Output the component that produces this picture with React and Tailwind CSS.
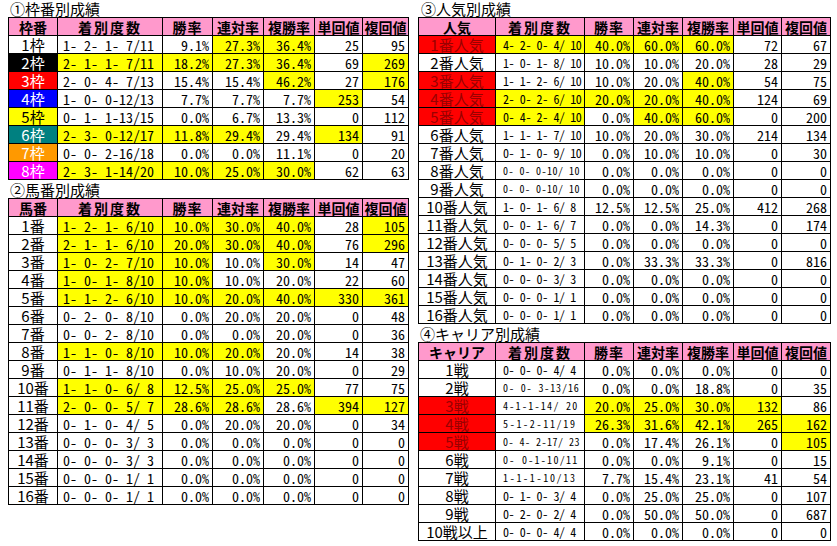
import React from "react";

const JP = "font-['Noto_Sans_CJK_JP','Noto_Sans',sans-serif]";
const MONO = "font-['Noto_Sans_Mono_CJK_JP','DejaVu_Sans_Mono',monospace]";

const LABEL_CLS = {
  w: "bg-white text-black",
  k: "bg-black text-white",
  r: "bg-[#ff0000] text-white",
  b: "bg-[#0000ff] text-white",
  y: "bg-[#ffff00] text-black",
  t: "bg-[#008080] text-white",
  o: "bg-[#ff9900] text-white",
  m: "bg-[#ff00ff] text-white",
  R: "bg-[#ff0000] text-[#990000]",
};

const SMALL_TRACK = {
  11: "tracking-[1.7px]",
  12: "tracking-[1.3px]",
  13: "tracking-[0.9px]",
  14: "tracking-[0.5px]",
};

const HEAD = ["着別度数", "勝率", "連対率", "複勝率", "単回値", "複回値"];

const T1 = [
  ["1枠", "w", "1- 2- 1- 7/11", "9.1%", "*27.3%", "*36.4%", "25", "95"],
  ["2枠", "k", "*2- 1- 1- 7/11", "*18.2%", "*27.3%", "*36.4%", "69", "*269"],
  ["3枠", "r", "2- 0- 4- 7/13", "15.4%", "15.4%", "*46.2%", "27", "*176"],
  ["4枠", "b", "1- 0- 0-12/13", "7.7%", "7.7%", "7.7%", "*253", "54"],
  ["5枠", "y", "0- 1- 1-13/15", "0.0%", "6.7%", "13.3%", "0", "112"],
  ["6枠", "t", "*2- 3- 0-12/17", "*11.8%", "*29.4%", "29.4%", "*134", "91"],
  ["7枠", "o", "0- 0- 2-16/18", "0.0%", "0.0%", "11.1%", "0", "20"],
  ["8枠", "m", "*2- 3- 1-14/20", "*10.0%", "*25.0%", "*30.0%", "62", "63"],
];

const T2 = [
  ["1番", "w", "*1- 2- 1- 6/10", "*10.0%", "*30.0%", "*40.0%", "28", "*105"],
  ["2番", "w", "*2- 1- 1- 6/10", "*20.0%", "*30.0%", "*40.0%", "76", "*296"],
  ["3番", "w", "*1- 0- 2- 7/10", "*10.0%", "10.0%", "*30.0%", "14", "47"],
  ["4番", "w", "*1- 0- 1- 8/10", "*10.0%", "10.0%", "20.0%", "22", "60"],
  ["5番", "w", "*1- 1- 2- 6/10", "*10.0%", "*20.0%", "*40.0%", "*330", "*361"],
  ["6番", "w", "0- 2- 0- 8/10", "0.0%", "20.0%", "20.0%", "0", "48"],
  ["7番", "w", "0- 0- 2- 8/10", "0.0%", "0.0%", "20.0%", "0", "36"],
  ["8番", "w", "*1- 1- 0- 8/10", "*10.0%", "*20.0%", "20.0%", "14", "38"],
  ["9番", "w", "0- 1- 1- 8/10", "0.0%", "10.0%", "20.0%", "0", "29"],
  ["10番", "w", "*1- 1- 0- 6/ 8", "*12.5%", "*25.0%", "*25.0%", "77", "75"],
  ["11番", "w", "*2- 0- 0- 5/ 7", "*28.6%", "*28.6%", "28.6%", "*394", "*127"],
  ["12番", "w", "0- 1- 0- 4/ 5", "0.0%", "20.0%", "20.0%", "0", "34"],
  ["13番", "w", "0- 0- 0- 3/ 3", "0.0%", "0.0%", "0.0%", "0", "0"],
  ["14番", "w", "0- 0- 0- 3/ 3", "0.0%", "0.0%", "0.0%", "0", "0"],
  ["15番", "w", "0- 0- 0- 1/ 1", "0.0%", "0.0%", "0.0%", "0", "0"],
  ["16番", "w", "0- 0- 0- 1/ 1", "0.0%", "0.0%", "0.0%", "0", "0"],
];

const T3 = [
  ["1番人気", "R", "*4- 2- 0- 4/ 10", "*40.0%", "*60.0%", "*60.0%", "72", "67"],
  ["2番人気", "w", "1- 0- 1- 8/ 10", "10.0%", "10.0%", "20.0%", "28", "29"],
  ["3番人気", "R", "1- 1- 2- 6/ 10", "10.0%", "20.0%", "*40.0%", "54", "75"],
  ["4番人気", "R", "*2- 0- 2- 6/ 10", "*20.0%", "*20.0%", "*40.0%", "124", "69"],
  ["5番人気", "R", "*0- 4- 2- 4/ 10", "0.0%", "*40.0%", "*60.0%", "0", "200"],
  ["6番人気", "w", "1- 1- 1- 7/ 10", "10.0%", "20.0%", "30.0%", "214", "134"],
  ["7番人気", "w", "0- 1- 0- 9/ 10", "0.0%", "10.0%", "10.0%", "0", "30"],
  ["8番人気", "w", "~0- 0- 0-10/ 10", "0.0%", "0.0%", "0.0%", "0", "0"],
  ["9番人気", "w", "~0- 0- 0-10/ 10", "0.0%", "0.0%", "0.0%", "0", "0"],
  ["10番人気", "w", "1- 0- 1- 6/ 8", "12.5%", "12.5%", "25.0%", "412", "268"],
  ["11番人気", "w", "0- 0- 1- 6/ 7", "0.0%", "0.0%", "14.3%", "0", "174"],
  ["12番人気", "w", "0- 0- 0- 5/ 5", "0.0%", "0.0%", "0.0%", "0", "0"],
  ["13番人気", "w", "0- 1- 0- 2/ 3", "0.0%", "33.3%", "33.3%", "0", "816"],
  ["14番人気", "w", "0- 0- 0- 3/ 3", "0.0%", "0.0%", "0.0%", "0", "0"],
  ["15番人気", "w", "0- 0- 0- 1/ 1", "0.0%", "0.0%", "0.0%", "0", "0"],
  ["16番人気", "w", "0- 0- 0- 1/ 1", "0.0%", "0.0%", "0.0%", "0", "0"],
];

const T4 = [
  ["1戦", "w", "0- 0- 0- 4/ 4", "0.0%", "0.0%", "0.0%", "0", "0"],
  ["2戦", "w", "~0- 0- 3-13/16", "0.0%", "0.0%", "18.8%", "0", "35"],
  ["3戦", "R", "~4-1-1-14/ 20", "*20.0%", "*25.0%", "*30.0%", "*132", "86"],
  ["4戦", "R", "~5-1-2-11/19", "*26.3%", "*31.6%", "*42.1%", "*265", "*162"],
  ["5戦", "R", "~0- 4- 2-17/ 23", "0.0%", "17.4%", "26.1%", "0", "*105"],
  ["6戦", "w", "~0- 0-1-10/11", "0.0%", "0.0%", "9.1%", "0", "15"],
  ["7戦", "w", "~1-1-1-10/13", "7.7%", "15.4%", "23.1%", "41", "54"],
  ["8戦", "w", "0- 1- 0- 3/ 4", "0.0%", "25.0%", "25.0%", "0", "107"],
  ["9戦", "w", "0- 2- 0- 2/ 4", "0.0%", "50.0%", "50.0%", "0", "687"],
  ["10戦以上", "w", "0- 0- 0- 4/ 4", "0.0%", "0.0%", "0.0%", "0", "0"],
];

function parse(v) {
  let yellow = false;
  let small = false;
  let s = v;
  if (s.startsWith("*")) {
    yellow = true;
    s = s.slice(1);
  }
  if (s.startsWith("~")) {
    small = true;
    s = s.slice(1);
  }
  return { yellow, small, s };
}

function Table({ cols, first, rows, wide }) {
  return (
    <div className={`grid border-l border-t border-black ${cols}`}>
      <div
        className={`h-[18px] border-r border-b border-black bg-[#ff99cc] flex items-center justify-center text-[14px] font-bold leading-none ${JP}`}
      >
        {first}
      </div>
      {HEAD.map((h, i) => (
        <div
          key={h}
          className={`h-[18px] border-r border-b border-black bg-[#ff99cc] flex items-center justify-center text-[14px] font-bold leading-none ${JP} ${
            i === 0 ? "tracking-[2px]" : i === 1 ? "tracking-[1px]" : ""
          }`}
        >
          {h}
        </div>
      ))}
      {rows.map((r, ri) => {
        const rec = parse(r[2]);
        const size = rec.small
          ? `text-[10px] ${SMALL_TRACK[rec.s.length] || ""}`
          : wide
          ? "text-[14px]"
          : "text-[12px] tracking-[-0.4px]";
        return (
          <React.Fragment key={ri}>
            <div
              className={`h-[18px] border-r border-b border-black flex items-center justify-center text-[15px] leading-none whitespace-nowrap ${JP} ${LABEL_CLS[r[1]]}`}
            >
              {r[0]}
            </div>
            <div
              className={`h-[18px] border-r border-b border-black flex items-center leading-none whitespace-pre ${MONO} ${
                wide ? "pl-[5px]" : "pl-[7px]"
              } ${size} ${rec.yellow ? "bg-[#ffff00]" : "bg-white"}`}
            >
              {rec.s}
            </div>
            {r.slice(3).map((v, vi) => {
              const p = parse(v);
              return (
                <div
                  key={vi}
                  className={`h-[18px] border-r border-b border-black flex items-center justify-end pr-[3px] text-[14px] leading-none whitespace-pre ${MONO} ${
                    p.yellow ? "bg-[#ffff00]" : "bg-white"
                  }`}
                >
                  {p.s}
                </div>
              );
            })}
          </React.Fragment>
        );
      })}
    </div>
  );
}

function Title({ children, h, pl }) {
  return (
    <div
      className={`${h} ${pl} flex items-end text-[15px] leading-[17px] text-black whitespace-nowrap ${JP}`}
    >
      {children}
    </div>
  );
}

export default function App() {
  const leftCols = "grid-cols-[49px_105px_50px_51px_51px_48px_46px] w-[401px]";
  const rightCols = "grid-cols-[77px_89px_49px_49px_51px_48px_49px] w-[413px]";
  return (
    <div className="w-[837px] h-[546px] bg-white overflow-hidden flex text-black">
      <div className="ml-[8px] w-[401px] flex flex-col">
        <Title h="h-[17px]" pl="pl-[2px]">①枠番別成績</Title>
        <Table cols={leftCols} first="枠番" rows={T1} wide />
        <Title h="h-[18px]" pl="pl-[2px]">②馬番別成績</Title>
        <Table cols={leftCols} first="馬番" rows={T2} wide />
      </div>
      <div className="ml-[9px] w-[413px] flex flex-col">
        <Title h="h-[17px]" pl="pl-[3px]">③人気別成績</Title>
        <Table cols={rightCols} first="人気" rows={T3} />
        <Title h="h-[18px]" pl="pl-[2px]">④キャリア別成績</Title>
        <Table cols={rightCols} first="キャリア" rows={T4} />
      </div>
    </div>
  );
}
